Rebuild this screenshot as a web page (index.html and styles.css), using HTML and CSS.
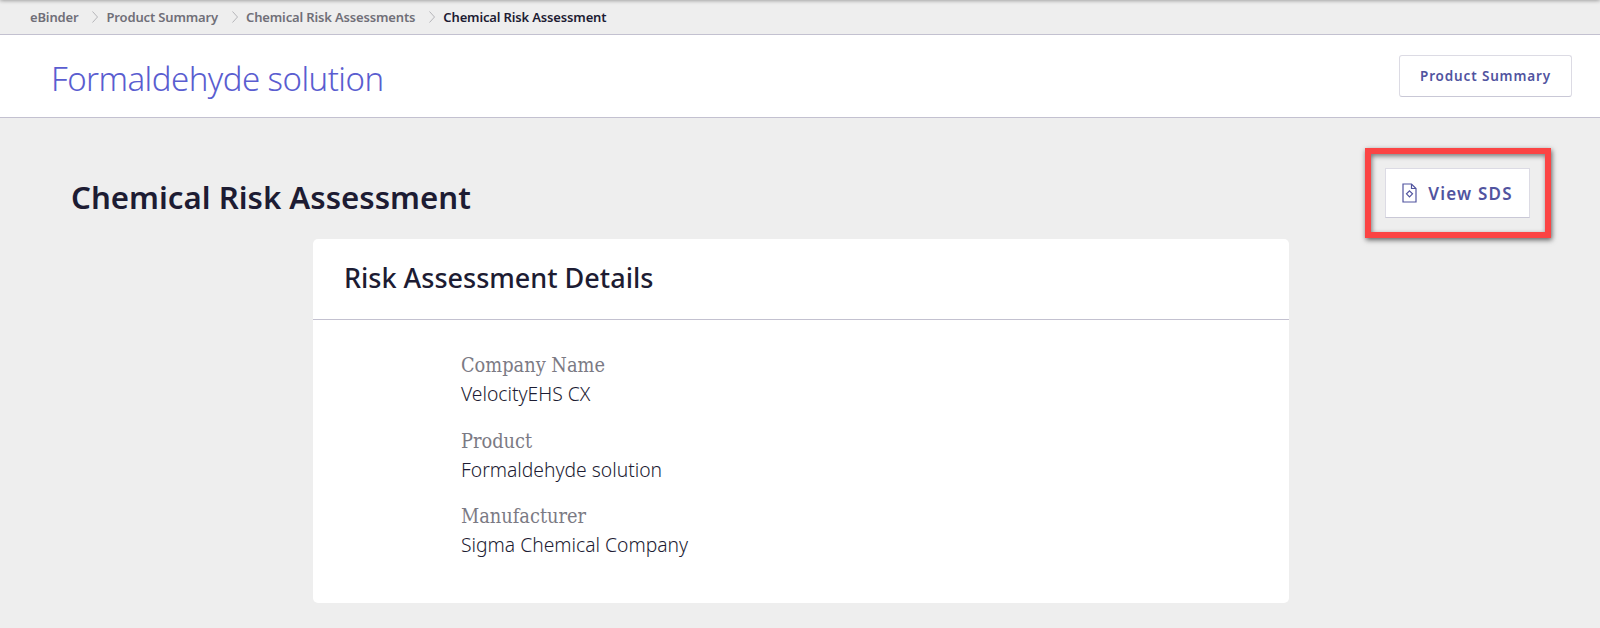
FILE: index.html
```html
<!DOCTYPE html>
<html lang="en">
<head>
<meta charset="utf-8">
<title>Chemical Risk Assessment</title>
<link rel="stylesheet" href="styles.css">
</head>
<body>
<nav class="crumbs">
  <a class="crumb">eBinder</a>
  <svg class="sep" viewBox="0 0 6 12"><path d="M.5 .5l5 5.500-5 5.500"/></svg>
  <a class="crumb">Product Summary</a>
  <svg class="sep" viewBox="0 0 6 12"><path d="M.5 .5l5 5.500-5 5.500"/></svg>
  <a class="crumb">Chemical Risk Assessments</a>
  <svg class="sep" viewBox="0 0 6 12"><path d="M.5 .5l5 5.500-5 5.500"/></svg>
  <span class="crumb current">Chemical Risk Assessment</span>
</nav>
<header class="topbar">
  <h1 class="product">Formaldehyde solution</h1>
  <button class="btn btn-summary">Product Summary</button>
</header>
<main class="page">
  <div class="page-head">
    <h2 class="page-title">Chemical Risk Assessment</h2>
    <button class="btn btn-sds">
      <svg class="doc" viewBox="0 0 15 20"><path d="M1 1h8.500L14 5.500V19H1z"/><path d="M9.500 1v4.500H14"/><path d="M7.500 7.800l3 3-3 3-3-3z"/></svg>
      View SDS
    </button>
    <div class="callout"></div>
  </div>
  <section class="card">
    <h3 class="card-title">Risk Assessment Details</h3>
    <dl class="details">
      <div class="field"><dt>Company Name</dt><dd>VelocityEHS CX</dd></div>
      <div class="field"><dt>Product</dt><dd>Formaldehyde solution</dd></div>
      <div class="field"><dt>Manufacturer</dt><dd>Sigma Chemical Company</dd></div>
    </dl>
  </section>
</main>
</body>
</html>
```
FILE: styles.css
```css
* { box-sizing: border-box; }
html, body { margin: 0; height: 628px; overflow: hidden; }
body { background: #eeeeee; font-family: "Noto Sans", sans-serif; color: #1d1c33; position: relative; }
body::before { content: ""; position: absolute; left: 0; right: 0; top: -3px; height: 3px; box-shadow: 0 0 4px rgba(0,0,0,.55); }
.crumbs { height: 35px; border-bottom: 1px solid #c3c1d0; display: flex; align-items: center; padding: 0 0 1px 30px; font-size: 13px; font-weight: 600; letter-spacing: -.15px; }
.crumb { color: #706f78; }
.crumb.current { color: #1d1c33; }
.sep { width: 6px; height: 12px; margin: 0 8px 0 14px; fill: none; stroke: #b5b5b9; stroke-width: 1; }
.topbar { height: 83px; background: #fff; border-bottom: 1px solid #c3c1d0; display: flex; align-items: center; justify-content: space-between; padding: 0 28px 0 51px; }
.product { margin: 4px 0 0; font-size: 33px; font-weight: 300; color: #5a5dd0; letter-spacing: -.55px; }
.btn { font-family: inherit; background: #fff; color: #51549f; font-weight: 600; cursor: pointer; }
.btn-summary { width: 173px; height: 42px; border: 1px solid #dcdbe4; border-bottom-color: #c9c8d6; border-radius: 3px; font-size: 13.5px; letter-spacing: .85px; }
.page { padding: 0 70px 0 71px; }
.page-head { height: 121px; position: relative; display: flex; justify-content: space-between; align-items: flex-start; }
.page-title { margin: 58px 0 0; font-size: 31.200px; font-weight: 600; line-height: 42px; color: #1d1c33; }
.btn-sds { margin: 50px 0 0; width: 145px; height: 50px; border: 1px solid #dcdbe4; border-bottom-color: #c9c8d6; font-size: 17px; letter-spacing: 1.2px; display: flex; align-items: center; justify-content: center; gap: 11px; }
.doc { width: 15px; height: 20px; fill: none; stroke: #51549f; stroke-width: 1.2; }
.callout { position: absolute; left: 1294px; top: 30px; width: 186px; height: 90px; border: 6px solid #fb4444; box-shadow: 1px 2px 5px rgba(0,0,0,.6), inset 1px 2px 5px rgba(0,0,0,.5); pointer-events: none; }
.card { width: 976px; height: 364px; margin-left: 242px; background: #fff; border-radius: 5px; }
.card-title { margin: 0; height: 81px; border-bottom: 1px solid #c3c1d0; padding: 0 0 3px 31px; display: flex; align-items: center; font-size: 27px; font-weight: 500; color: #1d1c33; }
.details { margin: 0; padding: 32px 0 0 148px; display: flex; flex-direction: column; gap: 18.500px; }
.field dt { font-family: "DejaVu Serif Condensed", "DejaVu Serif", serif; font-size: 19.800px; line-height: 28px; margin-bottom: -2px; color: #7b7a84; }
.field dd { margin: 0; font-size: 19.300px; font-weight: 300; line-height: 31px; color: #1d1c33; }
```
